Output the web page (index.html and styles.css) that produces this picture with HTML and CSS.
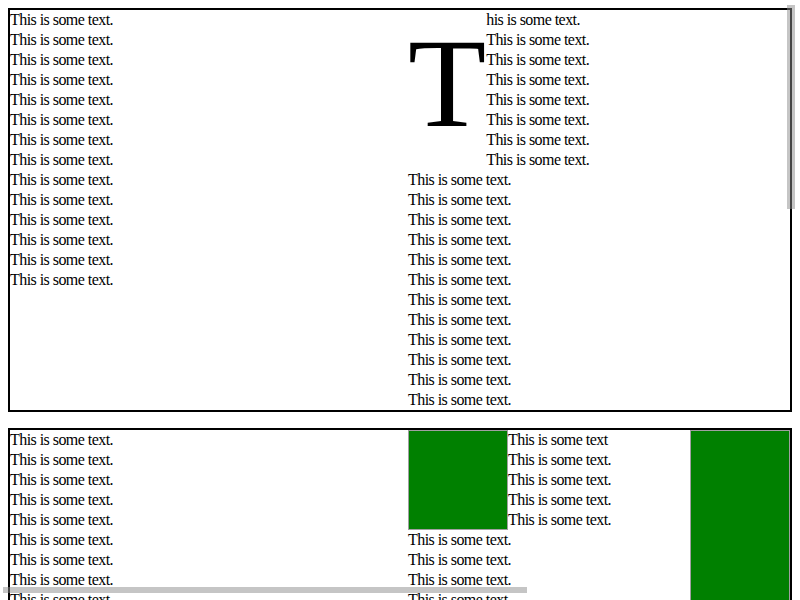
FILE: index.html
```html
<!DOCTYPE html>
<html>
	<head>
		<meta charset="UTF-8">
		<title>columns and floats</title>
		<link rel="stylesheet" href="styles.css">
	</head>
	<body>
		<div class="box">
			<div class="col">
				This is some text.<br>This is some text.<br>This is some text.<br>This is some text.<br>
				This is some text.<br>This is some text.<br>This is some text.<br>This is some text.<br>
				This is some text.<br>This is some text.<br>This is some text.<br>This is some text.<br>
				This is some text.<br>This is some text.
			</div>
			<div class="col next">
				<span class="initial">T</span>his is some text.<br>This is some text.<br>This is some text.<br>This is some text.<br>
				This is some text.<br>This is some text.<br>This is some text.<br>This is some text.<br>
				This is some text.<br>This is some text.<br>This is some text.<br>This is some text.<br>
				This is some text.<br>This is some text.<br>This is some text.<br>This is some text.<br>
				This is some text.<br>This is some text.<br>This is some text.<br>This is some text.
			</div>
		</div>

		<div class="box">
			<div class="col">
				This is some text.<br>This is some text.<br>This is some text.<br>This is some text.<br>
				This is some text.<br>This is some text.<br>This is some text.<br>This is some text.<br>
				This is some text.<br>This is some text.<br>This is some text.<br>This is some text.<br>
				This is some text.<br>This is some text.<br>This is some text.<br>This is some text.<br>
				This is some text.<br>This is some text.<br>This is some text.<br>This is some text.
			</div>
			<div class="col next">
				<div class="block left"></div>
				<div class="block right"></div>
				This is some text<br>This is some text.<br>This is some text.<br>This is some text.<br>
				This is some text.<br>This is some text.<br>This is some text.<br>This is some text.<br>
				This is some text.<br>This is some text.<br>This is some text.<br>This is some text.<br>
				This is some text.<br>This is some text.<br>This is some text.<br>This is some text.
			</div>
		</div>

		<div class="thumb vertical"></div>
		<div class="thumb horizontal"></div>
	</body>
</html>
```

FILE: styles.css
```css
html {
	overflow : hidden;
}
body {
	margin : 8px;
	font-family : "Liberation Serif", serif;
	font-size : 16px;
	line-height : 20px;
	letter-spacing : -0.55px;
	color : #000;
	background : #fff;
}
.box {
	border : 2px solid #000;
	height : 400px;
	margin : 0 0 16px;
	column-count : 2;
	column-gap : 16px;
	column-fill : auto;
}
.col.next {
	break-before : column;
}
.initial {
	float : left;
	font-size : 128px;
	line-height : normal;
	letter-spacing : 0;
}
.block {
	box-sizing : border-box;
	width : 100px;
	background : #008000;
	border : 1px solid #a0a0a0;
}
.block.left {
	float : left;
	height : 100px;
}
.block.right {
	float : right;
	height : 300px;
}
.thumb {
	position : fixed;
	background : rgba(140, 140, 140, 0.5);
}
.thumb.vertical {
	left : 787px;
	top : 5px;
	width : 8px;
	height : 204px;
}
.thumb.horizontal {
	left : 3px;
	top : 587px;
	width : 524px;
	height : 6px;
}
```
